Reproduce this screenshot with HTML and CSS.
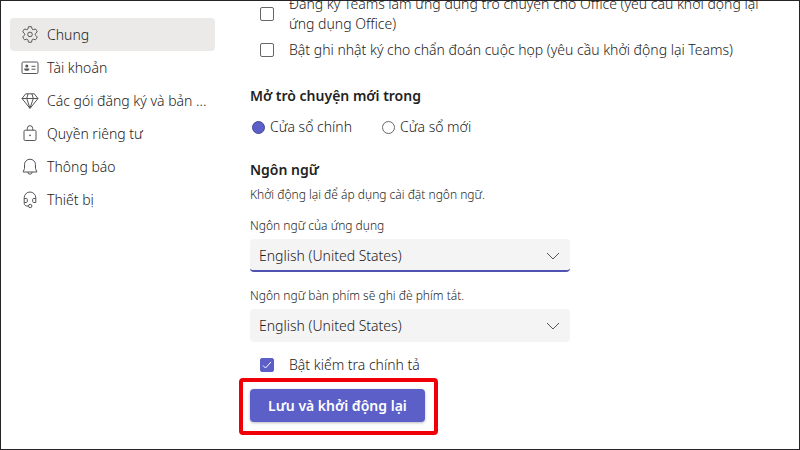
FILE: index.html
```html
<!DOCTYPE html>
<html lang="vi">
<head>
<meta charset="utf-8">
<meta name="viewport" content="width=device-width, initial-scale=1">
<title>Cài đặt</title>
<link rel="stylesheet" href="styles.css">
</head>
<body>
<div class="window">
  <nav class="sidebar">
    <a class="nav-item active" href="#general">
      <svg class="icon" viewBox="0 0 18 18"><path d="M7.4.8q1.6-.4 3.2 0l.5 2.2q.3.9 1.300.6l2.100-.6q1.200 1.300 1.700 2.900l-1.600 1.500q-.8.9 0 1.900l1.600 1.600q-.5 1.600-1.700 2.900l-2.100-.6q-1-.3-1.300.7l-.5 2.200q-1.600.4-3.200 0l-.5-2.200q-.3-1-1.300-.7l-2.100.6q-1.200-1.300-1.700-2.900l1.600-1.600q.8-1 0-1.900L1.800 5.900q.5-1.600 1.700-2.900l2.100.6q1 .3 1.300-.6z"/><circle cx="9" cy="8.400" r="2.300"/></svg>
      <span>Chung</span>
    </a>
    <a class="nav-item" href="#account">
      <svg class="icon" viewBox="0 0 18 18"><rect x="1" y="3" width="16" height="11.5" rx="1.2"/><circle class="solid" cx="5.8" cy="7" r="1.5"/><path class="solid" d="M3.3 9.4h5v.8c0 2.2-5 2.2-5 0z"/><path d="M10.5 7.3h4M10.5 10.2h4"/></svg>
      <span>Tài khoản</span>
    </a>
    <a class="nav-item" href="#plans">
      <svg class="icon" viewBox="0 0 18 18"><path d="M4.7 1.8h8.6L17 6.5 9 16.4 1 6.5zM1 6.5h16M7.1 1.8 5.7 6.5 9 16.2l3.3-9.7-1.4-4.7"/></svg>
      <span>Các gói đăng ký và bản ...</span>
    </a>
    <a class="nav-item" href="#privacy">
      <svg class="icon" viewBox="0 0 18 18"><rect x="3" y="5.2" width="12" height="10.3" rx="1.2"/><path d="M6.3 5.2V3.4a2.7 2.7 0 0 1 5.4 0v1.8"/><circle class="solid" cx="9" cy="10.3" r=".9"/></svg>
      <span>Quyền riêng tư</span>
    </a>
    <a class="nav-item" href="#notifications">
      <svg class="icon" viewBox="0 0 18 18"><path d="M9 1.2a5.5 5.5 0 0 0-5.5 5.5v3.8L2.1 14h13.8l-1.4-3.5V6.7A5.5 5.5 0 0 0 9 1.2zM6.8 14a2.2 2.2 0 0 0 4.4 0"/></svg>
      <span>Thông báo</span>
    </a>
    <a class="nav-item" href="#devices">
      <svg class="icon" viewBox="0 0 18 18"><path d="M3.2 11.5V6.8a5.8 5.8 0 0 1 11.6 0v4.7M3.2 7.5h2.2c.6 0 .9.4.9.9v2.2c0 .6-.4.9-.9.9H3.2M14.8 7.5h-2.2c-.6 0-.9.4-.9.9v2.2c0 .6.4.9.9.9h2.2M3.2 11.5v.8c0 1.5 1.2 2.7 2.7 2.7h1.6"/><circle cx="9.2" cy="15" r="1.7"/></svg>
      <span>Thiết bị</span>
    </a>
  </nav>

  <main class="content">
    <div class="option">
      <input type="checkbox" id="register">
      <label for="register">Đăng ký Teams làm ứng dụng trò chuyện cho Office (yêu cầu khởi động lại ứng dụng Office)</label>
    </div>
    <div class="option">
      <input type="checkbox" id="logging">
      <label for="logging">Bật ghi nhật ký cho chẩn đoán cuộc họp (yêu cầu khởi động lại Teams)</label>
    </div>

    <h2>Mở trò chuyện mới trong</h2>
    <div class="radios">
      <div class="radio"><input type="radio" name="open" id="main-window" checked><label for="main-window">Cửa sổ chính</label></div>
      <div class="radio"><input type="radio" name="open" id="new-window"><label for="new-window">Cửa sổ mới</label></div>
    </div>

    <h2>Ngôn ngữ</h2>
    <p>Khởi động lại để áp dụng cài đặt ngôn ngữ.</p>
    <div class="field">
      <label for="app-language">Ngôn ngữ của ứng dụng</label>
      <div class="select focused">
        <select id="app-language"><option>English (United States)</option></select>
        <svg class="chevron" viewBox="0 0 14 8"><path d="M1 1l6 6 6-6"/></svg>
      </div>
    </div>
    <div class="field">
      <label for="keyboard-language">Ngôn ngữ bàn phím sẽ ghi đè phím tắt.</label>
      <div class="select">
        <select id="keyboard-language"><option>English (United States)</option></select>
        <svg class="chevron" viewBox="0 0 14 8"><path d="M1 1l6 6 6-6"/></svg>
      </div>
    </div>
    <div class="option spelling">
      <span class="tick">
        <input type="checkbox" id="spelling" checked>
        <svg viewBox="0 0 14 14"><path d="M3 7.5 5.5 10 11 4"/></svg>
      </span>
      <label for="spelling">Bật kiểm tra chính tả</label>
    </div>
    <div class="highlight"><button type="button">Lưu và khởi động lại</button></div>
  </main>
</div>
</body>
</html>
```
FILE: styles.css
```css
* {
  box-sizing: border-box;
}

body {
  margin: 0;
  background: #fff;
  color: #1c1c1c;
  font: 300 14px/20px "Noto Sans", sans-serif;
}

.window {
  display: flex;
  height: 100vh;
  border: 1px solid #252326;
  overflow: hidden;
}

.sidebar {
  flex: none;
  width: 214px;
  padding: 17px 0 0 9px;
}

.nav-item {
  display: flex;
  align-items: center;
  gap: 8px;
  height: 33px;
  padding: 0 4px 0 11px;
  border-radius: 4px;
  color: inherit;
  text-decoration: none;
}

.nav-item.active {
  background: #ebeae8;
}

.nav-item span {
  padding-top: 1px;
  white-space: nowrap;
}

.icon {
  flex: none;
  width: 18px;
  height: 18px;
  fill: none;
  stroke: #555;
  stroke-width: 1;
  stroke-linejoin: round;
}

.icon .solid {
  fill: #555;
  stroke: none;
}

/* Scrolled to its end: the last rows stay in view. */
.content {
  display: flex;
  flex: 1;
  flex-direction: column;
  justify-content: flex-end;
  max-width: 584px;
  padding: 0 35px 27px;
}

.option {
  display: flex;
  align-items: center;
  gap: 15px;
  margin-bottom: 6px;
  padding-left: 10px;
}

input {
  flex: none;
  appearance: none;
  width: 14px;
  height: 14px;
  margin: 0;
  border: 1px solid #666;
  border-radius: 2px;
  background: #fff;
}

h2 {
  margin: 20px 0 11px;
  color: #222;
  font-size: 14px;
  font-weight: 600;
  line-height: 20px;
}

.radios {
  display: flex;
  gap: 28px;
  margin-bottom: 3px;
}

.radio {
  display: flex;
  align-items: center;
  gap: 5px;
  padding-left: 2px;
}

.radio input {
  width: 13px;
  height: 13px;
  border-radius: 50%;
}

.radio input:checked {
  background: #5b5fc7;
  border-color: #444791;
}

h2 + p {
  margin: -5px 0 13px;
  font-size: 12px;
  line-height: 18px;
}

.field {
  margin-bottom: 14px;
}

.field + .field {
  margin: 1px 0 13px;
}

.field label {
  display: block;
  margin-bottom: 4px;
  font-size: 12px;
  line-height: 18px;
}

.select {
  position: relative;
  width: 320px;
  max-width: 100%;
}

select {
  display: block;
  appearance: none;
  width: 100%;
  height: 33px;
  padding: 1px 32px 0 9px;
  border: 0;
  border-radius: 4px;
  background: #f4f4f4;
  color: inherit;
  font: inherit;
}

.focused select {
  border-bottom: 2px solid #4f52b2;
  padding-top: 3px;
}

.chevron {
  position: absolute;
  top: 13px;
  right: 10px;
  width: 14px;
  height: 8px;
  fill: none;
  stroke: #555;
  pointer-events: none;
}

.spelling {
  margin-bottom: 14px;
}

.tick {
  position: relative;
  display: flex;
}

.tick input {
  background: #5b5fc7;
  border-color: #5b5fc7;
}

.tick svg {
  position: absolute;
  inset: 0;
  fill: none;
  stroke: #fff;
  pointer-events: none;
}

.highlight {
  position: relative;
  align-self: flex-start;
}

.highlight::after {
  content: "";
  position: absolute;
  inset: -11px -13px -13px -11px;
  border: 4px solid #f00006;
  border-radius: 4px;
  pointer-events: none;
}

button {
  display: block;
  height: 33px;
  padding: 0 18px;
  border: 0;
  border-radius: 4px;
  background: #5b5fc7;
  box-shadow: 0 1px 3px #0004;
  color: #fff;
  font: 600 14px/20px "Noto Sans", sans-serif;
}
```
